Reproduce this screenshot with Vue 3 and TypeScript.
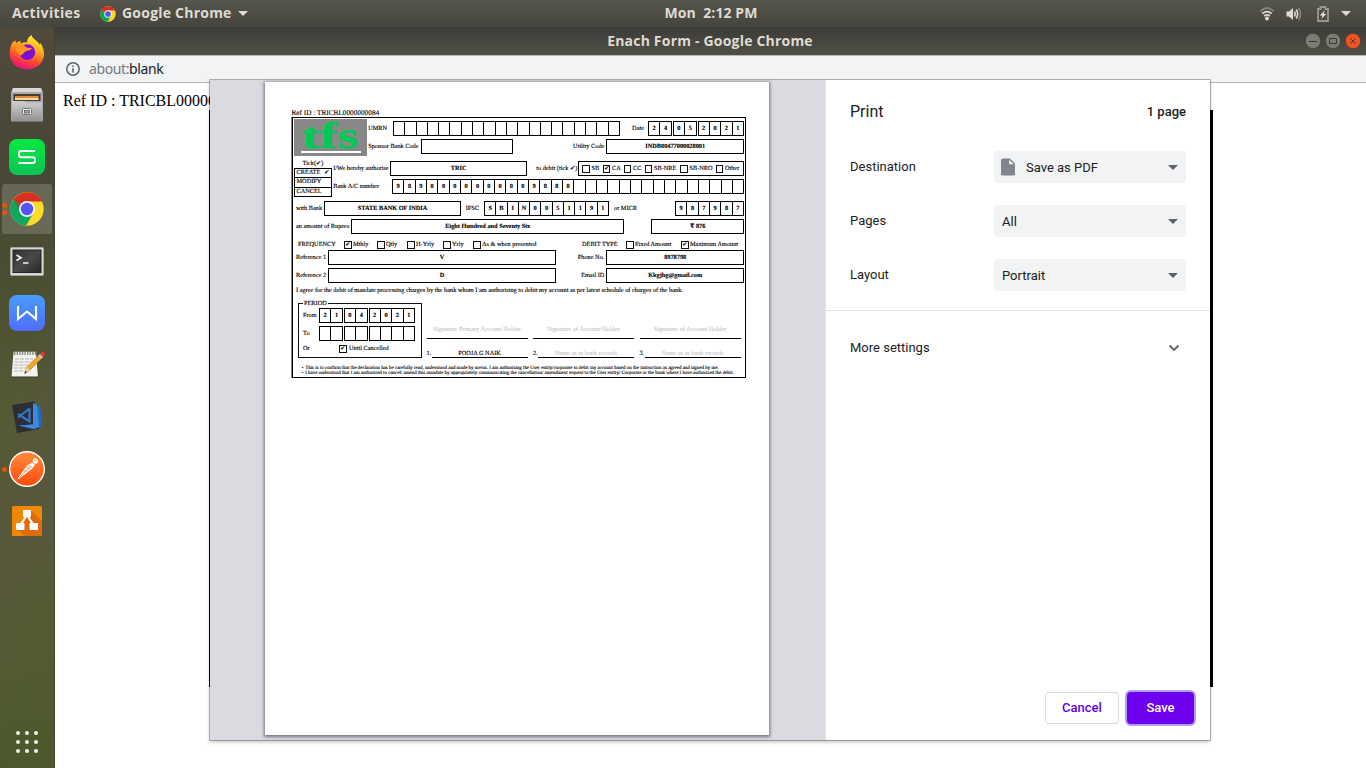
<script setup lang="ts">
const split = (s: string): string[] => s.split('')

const umrn = Array<string>(20).fill('')
const account = split('9890000000009888').concat(Array<string>(15).fill(''))
const ifsc = split('SBIN0051191')
const micr = split('987987')
const issued: string[][] = [split('24'), split('05'), split('2021')]
const fromDate: string[][] = [split('21'), split('04'), split('2021')]
const toDate: string[][] = [['', ''], ['', ''], ['', '', '', '']]

interface Tick { label: string; on?: boolean }
const accountTypes: Tick[] = [
  { label: 'SB' }, { label: 'CA', on: true }, { label: 'CC' },
  { label: 'SB-NRE' }, { label: 'SB-NRO' }, { label: 'Other' },
]
const frequencies: Tick[] = [
  { label: 'Mthly', on: true }, { label: 'Qtly' }, { label: 'H-Yrly' },
  { label: 'Yrly' }, { label: 'As & when presented' },
]
const debitTypes: Tick[] = [{ label: 'Fixed Amount' }, { label: 'Maximum Amount', on: true }]

const signers = [
  { caption: 'Signature Primary Account Holder', no: '1.', name: 'POOJA G NAIK', filled: true },
  { caption: 'Signature of Account Holder', no: '2.', name: 'Name as in bank records', filled: false },
  { caption: 'Signature of Account Holder', no: '3.', name: 'Name as in bank records', filled: false },
]
const settings = [
  { label: 'Destination', value: 'Save as PDF', file: true },
  { label: 'Pages', value: 'All', file: false },
  { label: 'Layout', value: 'Portrait', file: false },
]
</script>

<template>
  <div class="desktop">
    <header class="topbar">
      <div class="top-left">
        <span class="activities">Activities</span>
        <svg class="mini-chrome" width="16" height="16" viewBox="0 0 34 34">
          <circle cx="17" cy="17" r="16.5" fill="#fbd92b" />
          <path d="M17 17 2.7 8.8A16.500 16.500 0 0 1 31.800 9.500H17Z" fill="#dc2d22" />
          <path d="M17 17 2.700 8.800A16.500 16.500 0 0 0 16 33.500L23.500 21Z" fill="#0ea45c" />
          <circle cx="17" cy="17" r="8" fill="#f1f1f1" /><circle cx="17" cy="17" r="6" fill="#5353f0" />
        </svg>
        <span class="appname">Google Chrome</span>
        <i class="caret"></i>
      </div>
      <div class="clock">Mon&nbsp; 2:12 PM</div>
      <div class="top-right">
        <svg class="wifi" width="16" height="14" viewBox="0 0 16 14" fill="none" stroke-width="1.700">
          <path d="M1.300 4.300Q8-2.300 14.700 4.300" stroke="#858479" />
          <path d="M3.300 6.700Q8 2.400 12.700 6.700" stroke="#dfdbd2" />
          <path d="M5.200 9Q8 6.700 10.800 9" stroke="#dfdbd2" />
          <circle cx="8" cy="11.500" r="2" fill="#dfdbd2" />
        </svg>
        <svg class="vol" width="16" height="14" viewBox="0 0 16 14" fill="none" stroke-width="1.600">
          <path d="M.5 4.500H3L7 1v12L3 9.500H.5Z" fill="#dfdbd2" />
          <path d="M8.500 4.500Q10 7 8.500 9.500M10.300 2.500Q13 7 10.300 11.500" stroke="#dfdbd2" />
          <path d="M12.600 1Q16.600 7 12.600 13" stroke="#858479" />
        </svg>
        <svg class="batt" width="12" height="16" viewBox="0 0 12 16">
          <path d="M1 3H3.500V1H8.500V3H11V15H1Z" fill="none" stroke="#999890" stroke-width="1.800" />
          <path d="M7.800 4.300 2.800 9.600H5.500L4.300 13 9.300 8H6.700Z" fill="#e8e5dd" />
        </svg>
        <i class="caret"></i>
      </div>
    </header>

    <div class="main">
      <nav class="dock">
        <div class="slot first">
          <svg width="36" height="36" viewBox="0 0 36 36">
            <defs>
              <linearGradient id="fx" x1=".75" y1="0" x2=".35" y2="1">
                <stop offset="0" stop-color="#fff23a" /><stop offset=".38" stop-color="#ffad1c" />
                <stop offset=".68" stop-color="#ff4a2d" /><stop offset="1" stop-color="#e8107f" />
              </linearGradient>
              <radialGradient id="fxc"><stop offset="0" stop-color="#6b12c8" /><stop offset="1" stop-color="#8f0bd8" /></radialGradient>
            </defs>
            <path d="M3.500 8.500 6.500 6.500 7 9 11.500 6.500V9.500C14 8.500 16 8 18 8.300 18 5 20 2.500 22.500 1 23.500 5 29 7 30.500 10.500L31.500 9C36.500 17 36.500 25.500 29.500 31.500 23 37 12 36.500 5.500 31-.8 25-.5 15 3.500 8.500Z" fill="url(#fx)" />
            <circle cx="18.300" cy="18.300" r="8" fill="url(#fxc)" />
            <path d="M6 10C10 8.500 14 10 18 13.800L23 14C22 16.500 19 16.500 17.500 17 14.500 18 14.500 20.500 11.500 21.500 7.500 19 6 15 6 10Z" fill="#ff9420" />
            <path d="M3 14C5 20 8 23 11.500 23.500 14.500 27.800 22 28 26 22 28 18 26 12 23 10.500 29 12 32 19 29 25.500" fill="none" stroke="#ffb321" stroke-width=".9" opacity=".35" />
          </svg>
        </div>
        <div class="slot">
          <svg width="34" height="36" viewBox="0 0 34 36">
            <defs><linearGradient id="fl" x1="0" y1="0" x2="0" y2="1"><stop offset="0" stop-color="#d0d0d0" /><stop offset="1" stop-color="#939393" /></linearGradient></defs>
            <path d="M3 1H31L33 5V33Q33 34.500 31.500 34.500H2.500Q1 34.500 1 33V5Z" fill="#a9a9a9" />
            <path d="M3 1H31L32 5H2Z" fill="#d8d8d8" />
            <rect x="3.500" y="7" width="27" height="7" fill="#443b30" />
            <path d="M5 9H28.500V12.500H5Z" fill="#e98a32" /><path d="M5 11H28.500V13H5Z" fill="#f7dcae" />
            <path d="M2 14H14L16 15.500H32V33Q32 34 31 34H3Q2 34 2 33Z" fill="url(#fl)" />
            <rect x="12.500" y="21.500" width="9" height="6" rx="1" fill="#e9e9e9" stroke="#777" />
            <rect x="14.500" y="23.500" width="5" height="2.500" fill="#a0a0a0" stroke="#555" stroke-width=".7" />
          </svg>
        </div>
        <div class="slot">
          <svg width="36" height="36" viewBox="0 0 36 36">
            <defs><linearGradient id="sg" x1="0" y1="0" x2="0" y2="1"><stop offset="0" stop-color="#05ea42" /><stop offset="1" stop-color="#08c455" /></linearGradient></defs>
            <rect width="36" height="36" rx="8" fill="url(#sg)" />
            <path d="M26 12H12.500Q10 12 10 14.300V16Q10 18.300 12.500 18.300H23.500Q26 18.300 26 20.500V22Q26 24 23.500 24H9.500" fill="none" stroke="#fff" stroke-width="2" />
          </svg>
        </div>
        <div class="slot active">
          <i class="dots"><b></b><b></b></i>
          <svg width="34" height="34" viewBox="0 0 34 34">
            <circle cx="17" cy="17" r="16.700" fill="#fbdc28" />
            <path d="M17 17 3.300 7.500A16.700 16.700 0 0 1 32 9.500H17Z" fill="#dc2d22" />
            <path d="M17 17 3.300 7.500A16.700 16.700 0 0 0 16 33.700L23.800 20.500Z" fill="#0ea85f" />
            <path d="M3.300 7.500 10 19 16 10Z" fill="#b92a20" opacity=".45" />
            <circle cx="17" cy="17" r="8" fill="#f0f0f2" /><circle cx="17" cy="17" r="6.200" fill="#5555f4" />
          </svg>
        </div>
        <div class="slot">
          <svg width="34" height="29" viewBox="0 0 34 29">
            <defs><linearGradient id="tg" x1="0" y1="0" x2="1" y2="1"><stop offset="0" stop-color="#303030" /><stop offset=".5" stop-color="#494949" /><stop offset="1" stop-color="#262626" /></linearGradient></defs>
            <rect x=".5" y=".5" width="33" height="28" rx="1" fill="#d7d7d5" stroke="#a6a6a2" />
            <rect x="3" y="3" width="28" height="22.500" fill="url(#tg)" stroke="#222" />
            <path d="M6.500 8 11 10.700 6.500 13.500M13 16H18.500" fill="none" stroke="#eee" stroke-width="1.700" />
          </svg>
        </div>
        <div class="slot">
          <svg width="36" height="36" viewBox="0 0 36 36">
            <defs><linearGradient id="wg" x1="0" y1="0" x2="0" y2="1"><stop offset="0" stop-color="#4a9cfa" /><stop offset="1" stop-color="#506cfb" /></linearGradient></defs>
            <rect width="36" height="36" rx="8" fill="url(#wg)" />
            <path d="M9 11V24L18 16.500 27 24V11" fill="none" stroke="#fff" stroke-width="2.100" />
          </svg>
        </div>
        <div class="slot">
          <svg width="36" height="32" viewBox="0 0 36 32">
            <path d="M4.500 3H27L30 28.500H2Z" fill="#34352b" />
            <path d="M4.500 3H27L29 27.500H2.500Z" fill="#f2f2ee" />
            <path d="M5 4H28" stroke="#8a8a84" stroke-width="4" stroke-dasharray="1.400 1.200" />
            <path d="M6 10H24M5.500 13H22M5.500 16H20M5 19H18M5 22H14" stroke="#b4b4b0" stroke-width="1" stroke-dasharray="4 1" />
            <path d="M15.500 24.500 18 18 31 5 34 8 21 21Z" fill="#f0a82b" stroke="#b9731c" stroke-width=".6" />
            <path d="M15.500 24.500 18 18 21 21Z" fill="#ead09e" /><path d="M15.300 24.700 16.500 21.700 18 23.200Z" fill="#333" />
            <path d="M30 6 32 4Q34 2 35.500 3.500 37 5 33.500 8.500Z" fill="#dd3540" /><path d="M29 7 31 5 34 8 32 10Z" fill="#bdbdbd" />
          </svg>
        </div>
        <div class="slot">
          <svg width="32" height="34" viewBox="0 0 32 34">
            <path d="M1 5 23 1.500 24 3 28 29 6 33Z" fill="#2d2d34" />
            <path d="M22 3 29.500 7 31 26 23 29 7.500 25.500 22 24.500Z" fill="#2368bd" />
            <path d="M22 3 26 5 28 27 23 29 7.500 25.500 22 24.500Z" fill="#3a8be0" />
            <path d="M18.500 8.500 7 17.500M7 14 18.500 21.500V8.500" fill="none" stroke="#3178c8" stroke-width="2.200" />
          </svg>
        </div>
        <div class="slot">
          <i class="dots one"><b></b></i>
          <svg width="36" height="36" viewBox="0 0 36 36">
            <defs><linearGradient id="pg" x1="0" y1="0" x2="0" y2="1"><stop offset="0" stop-color="#ff8a3c" /><stop offset="1" stop-color="#ff4b0c" /></linearGradient></defs>
            <circle cx="18" cy="18" r="17.300" fill="url(#pg)" stroke="#fff" stroke-width="1.400" />
            <circle cx="26.300" cy="10" r="2.700" fill="#fff" /><path d="M24.800 10 28.300 8.700" stroke="#ff7b32" stroke-width=".8" />
            <path d="M23 11.500 26 14 22.500 18.500 17.500 22 10 27.800 8.500 28.500 9 27 14 20 18 14.500Z" fill="#fff" />
            <path d="M17.500 16 21.500 18.500M19.500 14 23.500 17M15 20 19 20.200M27 13.500 27.500 15M10.500 26.500 21 15.500" stroke="#ff6c26" stroke-width=".7" />
          </svg>
        </div>
        <div class="slot">
          <svg width="30" height="30" viewBox="0 0 30 30">
            <rect width="30" height="30" rx="1.500" fill="#f08705" />
            <path d="M19 4.500 30 15.500V30H13L5 23.500 12 16Z" fill="#df6c0c" />
            <path d="M15 9 8.500 19M15 9 21.500 19" stroke="#fff" stroke-width="2.200" />
            <rect x="11" y="4" width="8" height="7" rx=".8" fill="#fff" /><rect x="4" y="17" width="8.500" height="7" rx=".8" fill="#fff" /><rect x="17.500" y="17" width="8.500" height="7" rx=".8" fill="#fff" />
          </svg>
        </div>
        <div class="apps"><b v-for="n in 9" :key="n"></b></div>
      </nav>

      <section class="window">
        <div class="titlebar">
          <span class="wtitle">Enach Form - Google Chrome</span>
          <div class="winbtns">
            <svg v-for="k in 3" :key="k" width="16" height="16" viewBox="0 0 16 16" :class="['wb', { close: k === 3 }]">
              <circle cx="8" cy="8" r="7.700" />
              <path v-if="k === 1" d="M4 8.500H12" /><path v-else-if="k === 2" d="M4.500 5.500H11.500V10.500H4.500Z" /><path v-else d="M5.500 5.500 10.500 10.500M10.500 5.500 5.500 10.500" />
            </svg>
          </div>
        </div>
        <div class="address">
          <svg width="14" height="14" viewBox="0 0 14 14" fill="none" stroke="#5f6368" stroke-width="1.500">
            <circle cx="7" cy="7" r="6.200" /><path d="M7 6.200V10.500M7 3.500V5" stroke-width="1.600" />
          </svg>
          <span class="url">about:<em>blank</em></span>
        </div>
        <div class="page">
          <div class="pageref">Ref ID : TRICBL0000000084</div>
          <div class="frame"></div>
        </div>

        <div class="dialog">
          <div class="preview">
            <div class="paper">
              <div class="refid">Ref ID : TRICBL0000000084</div>
              <div class="form">
                <div class="head">
                  <div class="logo"><span>tfs</span></div>
                  <div class="headrows">
                    <div class="row r1">
                      <span class="lb">UMRN</span>
                      <div class="cells"><b v-for="(c, i) in umrn" :key="i">{{ c }}</b></div>
                      <span class="rt date">Date</span>
                      <div class="groups"><div v-for="(g, i) in issued" :key="i" class="cells" :class="{ wide: i === 2 }"><b v-for="(c, j) in g" :key="j">{{ c }}</b></div></div>
                    </div>
                    <div class="row r2">
                      <span class="lb">Sponsor Bank Code</span><div class="box"></div>
                      <span class="rt">Utility Code</span><div class="box">INDB00477000028001</div>
                    </div>
                  </div>
                </div>

                <div class="auth">
                  <div class="ticks">
                    <div class="tickhead">Tick(✔)</div>
                    <div class="tickrow"><span>CREATE</span><span>✔</span></div>
                    <div class="tickrow">MODIFY</div><div class="tickrow">CANCEL</div>
                  </div>
                  <div class="authrows">
                    <div class="row r3">
                      <span class="lb">I/We hereby authorise</span><div class="box">TRIC</div>
                      <span class="rt tight">to debit (tick ✔)</span>
                      <div class="box types"><span v-for="t in accountTypes" :key="t.label" class="chk"><i>{{ t.on ? '✔' : '' }}</i>{{ t.label }}</span></div>
                    </div>
                    <div class="row r4">
                      <span class="lb">Bank A/C number</span>
                      <div class="cells"><b v-for="(c, i) in account" :key="i">{{ c }}</b></div>
                    </div>
                  </div>
                </div>

                <div class="row r5">
                  <span class="in">with Bank</span><div class="box">STATE BANK OF INDIA</div>
                  <span class="rt ifsc">IFSC</span><div class="cells"><b v-for="(c, i) in ifsc" :key="i">{{ c }}</b></div>
                  <span class="micr">or MICR</span><div class="cells"><b v-for="(c, i) in micr" :key="i">{{ c }}</b></div>
                </div>
                <div class="row r6">
                  <span class="in">an amount of Rupees</span><div class="box">Eight Hundred and Seventy Six</div><span></span><div class="box">₹ 876</div>
                </div>
                <div class="row r7">
                  <span class="freq">FREQUENCY</span>
                  <span v-for="t in frequencies" :key="t.label" class="chk"><i>{{ t.on ? '✔' : '' }}</i>{{ t.label }}</span>
                  <span>DEBIT TYPE</span>
                  <span v-for="t in debitTypes" :key="t.label" class="chk"><i>{{ t.on ? '✔' : '' }}</i>{{ t.label }}</span>
                </div>
                <div class="row r8"><span class="in">Reference 1</span><div class="box">V</div><span class="rt">Phone No.</span><div class="box">8978798</div></div>
                <div class="row r8"><span class="in">Reference 2</span><div class="box">D</div><span class="rt">Email ID</span><div class="box">Kkgjhg@gmail.com</div></div>
                <div class="agree">I agree for the debit of mandate processing charges by the bank whom I am authorising to debit my account as per latest schedule of charges of the bank.</div>

                <div class="lower">
                  <div class="period">
                    <span class="legend">PERIOD</span>
                    <div class="row r9"><span class="pl">From</span><div class="groups"><div v-for="(g, i) in fromDate" :key="i" class="cells" :class="{ wide: i === 2 }"><b v-for="(c, j) in g" :key="j">{{ c }}</b></div></div></div>
                    <div class="row r9"><span class="pl">To</span><div class="groups"><div v-for="(g, i) in toDate" :key="i" class="cells" :class="{ wide: i === 2 }"><b v-for="(c, j) in g" :key="j">{{ c }}</b></div></div></div>
                    <div class="until"><span class="pl">Or</span><span class="chk"><i>✔</i>Until Cancelled</span></div>
                  </div>
                  <div v-for="s in signers" :key="s.no" class="signer">
                    <div class="sig">{{ s.caption }}</div>
                    <div class="named"><span>{{ s.no }}</span><div :class="{ filled: s.filled }">{{ s.name }}</div></div>
                  </div>
                </div>
                <div class="notes">
                  <div class="n1">This is to confirm that the declaration has be carefully read, understood and made by me/us. I am authorising the User entity/corporate to debit my account based on the instruction as agreed and signed by me.</div>
                  <div class="n2">I have understood that I am authorized to cancel/ amend this mandate by appropriately communicating the cancellation/ amendment request to the User entity/ Corporate or the bank where I have authorized the debit.</div>
                </div>
              </div>
            </div>
          </div>

          <aside class="options">
            <div class="ohead"><span>Print</span><strong>1 page</strong></div>
            <div v-for="s in settings" :key="s.label" class="setting">
              <span>{{ s.label }}</span>
              <div class="select">
                <svg v-if="s.file" width="14" height="18" viewBox="0 0 14 18"><path d="M2 .5H9L14 5.500V16Q14 17.500 12.500 17.500H1.500Q0 17.500 0 16V2Q0 .5 2 .5Z" fill="#80868b" /><path d="M8.200 1.800V6.200H12.600Z" fill="#f1f3f4" /></svg>
                <span>{{ s.value }}</span><i></i>
              </div>
            </div>
            <div class="more"><span>More settings</span>
              <svg width="12" height="8" viewBox="0 0 12 8"><path d="M1.500 1.500 6 6 10.500 1.500" fill="none" stroke="#5f6368" stroke-width="1.800" /></svg>
            </div>
            <div class="actions"><button class="cancel">Cancel</button><button class="save">Save</button></div>
          </aside>
        </div>
      </section>
    </div>
  </div>
</template>

<style>
html, body { margin: 0; overflow: hidden; }
</style>

<style scoped>
* { box-sizing: border-box; }
.desktop { width: 1366px; height: 768px; overflow: hidden; display: flex; flex-direction: column; background: #fff; }
.topbar { height: 27px; display: flex; align-items: center; background: linear-gradient(#57564d, #45443d); color: #dfdbd2; font: 700 14px/26px "Open Sans", "Noto Sans", sans-serif; letter-spacing: .15px; }
.top-left, .top-right { display: flex; align-items: center; height: 27px; }
.top-left { width: 664.500px; padding-left: 12px; }
.top-left > span, .clock { height: 27px; line-height: 26px; }
.activities { width: 88px; letter-spacing: .35px; }
.mini-chrome { margin-right: 6px; }
.appname { width: 112px; letter-spacing: .22px; }
.caret { border: 5px solid transparent; border-top: 5px solid #dfdbd2; border-bottom: 0; margin-left: 4px; }
.clock { white-space: pre; letter-spacing: .08px; }
.top-right { flex: 1; justify-content: flex-end; padding-right: 15px; }
.wifi { margin-right: 11px; }
.vol { margin-right: 15px; }
.batt { margin-right: 8px; }
.main { flex: 1; display: flex; min-height: 0; }
.dock { width: 55px; background: linear-gradient(100deg, transparent 40%, rgba(90, 80, 80, .18) 60%, transparent 75%), linear-gradient(#504a3c, #494737 18%, #4a4d31 32%, #555a34 52%, #57593a 68%, #535c30 84%, #4c572b); border-right: 1px solid #45452e; display: flex; flex-direction: column; position: relative; }
.slot { height: 52px; display: flex; align-items: center; justify-content: center; position: relative; flex: none; }
.slot.first { padding-bottom: 2px; }
.slot.active::before { content: ""; position: absolute; left: 2px; top: 1px; width: 50px; height: 50px; border-radius: 3px; background: rgba(255, 255, 255, .17); }
.slot svg { position: relative; }
.dots { position: absolute; left: 2px; top: 20px; display: grid; gap: 2px; }
.dots.one { top: 24px; }
.dots b { width: 5px; height: 5px; border-radius: 50%; background: #e8510d; }
.apps { margin: auto 0 15px 16px; display: grid; grid-template-columns: repeat(3, 4px); gap: 5px; }
.apps b { width: 4px; height: 4px; border-radius: 50%; background: #f1f1ee; }
.window { flex: 1; position: relative; background: #fff; display: flex; flex-direction: column; }
.titlebar { height: 28px; background: linear-gradient(#3c3b37, #504f47); display: flex; align-items: flex-start; justify-content: center; color: #dfdbd2; font: 700 14px/27px "Open Sans", "Noto Sans", sans-serif; letter-spacing: .2px; position: relative; }
.wtitle { margin-left: -1px; }
.winbtns { position: absolute; right: 5px; top: 6px; display: flex; gap: 4px; }
.wb { fill: #7d7c74; stroke: #3c3b37; stroke-width: 1; }
.wb circle { stroke: #34332f; stroke-width: .6; }
.wb path { fill: none; }
.wb.close circle { fill: #ee5421; }
.address { height: 28px; background: #f1f3f4; border-top: 1px solid #b8b8b5; border-bottom: 1px solid #b2b4b6; display: flex; align-items: center; padding-left: 11px; gap: 9px; font: 14px/26px "Noto Sans", sans-serif; color: #74787d; letter-spacing: -.4px; }
.url em { font-style: normal; color: #202124; }
.page { flex: 1; padding: 9px 8px 8px; }
.pageref { font: 16px/18px "Liberation Serif", serif; color: #000; }
.frame { margin: 0 0 0 146px; width: 1004px; height: 577px; border: 2px solid #000; border-right-width: 3px; }
.dialog { position: absolute; left: 155px; top: 53px; width: 1000px; height: 660px; background: #fff; display: flex; box-shadow: 0 0 0 1px rgba(0, 0, 0, .26), 0 2px 4px rgba(0, 0, 0, .25); }
.preview { width: 616px; background: #dadae0; border-right: 1px solid #e6e6e9; padding: 2px 0 0 55px; }
.paper { width: 504px; height: 653px; background: #fff; box-shadow: 0 1px 3px 1px rgba(60, 60, 70, .65); padding: 26px 0 0 27px; color: #000; font: 6.300px/8px "Liberation Serif", "DejaVu Sans", serif; text-rendering: geometricPrecision; white-space: nowrap; -webkit-text-stroke: .12px; }
.refid { font-size: 7.270px; line-height: 9px; height: 9px; padding-top: 1px; margin-left: -.5px; }
.form { width: 454px; height: 261px; border: 1px solid #000; box-shadow: -1px 0 #888; }
.head { display: flex; height: 38px; }
.logo { width: 73px; height: 37px; margin: 1px 0 0 1px; background: #888; display: flex; flex-direction: column; align-items: center; }
.logo span { font: 700 37px/35px "Liberation Serif", serif; color: #00c955; height: 32px; letter-spacing: .5px; transform: scaleX(1.400); -webkit-text-stroke: .5px; }
.logo::after { content: ""; width: 60px; height: 2px; background: #fff; }
.headrows { padding-top: 3px; }
.row { display: grid; height: 15px; align-items: center; }
.row > .box, .row > .cells, .groups { height: 15px; }
.r1 { grid-template-columns: 26px 227px 28px 96px; }
.r2 { grid-template-columns: 54px 92px 93.400px 137.600px; margin-top: 3px; }
.lb { padding-left: 1.200px; }
.rt { text-align: right; padding-right: 2px; }
.rt.date { padding-right: 4px; }
.rt.tight { padding-right: 1.200px; }
.rt.ifsc { padding-right: 5px; }
.micr { padding-left: 5px; }
.in { padding-left: 3px; }
.box { border: 1px solid #000; display: flex; align-items: center; justify-content: center; font-weight: 700; }
.cells { display: flex; border: 1px solid #000; border-left: 0; flex: 2; }
.cells.wide { flex: 4; }
.cells b { flex: 1; border-left: 1px solid #000; display: flex; align-items: center; justify-content: center; font-weight: 700; }
.groups { display: flex; gap: 1px; }
.auth { display: flex; height: 36px; margin-top: 2px; }
.ticks { width: 38px; margin-left: 1px; flex: none; }
.tickhead { height: 9px; line-height: 10px; text-align: center; padding-top: .5px; }
.tickrow { height: 10.500px; border: 1px solid #000; margin-bottom: -1px; padding: 0 1.500px; display: flex; justify-content: space-between; align-items: center; position: relative; top: .5px; }
.authrows { padding-top: 3px; }
.r3 { grid-template-columns: 58.400px 136.600px 51.500px 165.500px; }
.r4 { grid-template-columns: 60px 352px; margin-top: 3px; }
.types { font-weight: 400; display: grid; grid-template-columns: 20.500px 21px 21px 35.500px 35.500px 1fr; justify-content: start; padding-left: 3px; }
.chk { display: flex; align-items: center; gap: 1.500px; }
.chk i { width: 7.500px; height: 8px; border: 1px solid #111; font: normal 6px/6px "DejaVu Sans", sans-serif; text-align: center; flex: none; }
.r5 { grid-template-columns: 31px 137px 23px 125px 66px 69px; margin-top: 7px; }
.r6 { grid-template-columns: 58.400px 272.600px 27.400px 92.600px; margin-top: 3px; }
.r7 { grid-template-columns: 51px 33px 30px 36px 30px 109px 44px 55px 63px; height: 8px; margin: 6.500px 0 -1.500px; }
.freq { padding-left: 5px; }
.r8 { grid-template-columns: 35px 228px 50.400px 137.600px; margin-top: 3px; }
.agree { margin: 4px 0 -1px 3px; font-size: 6.330px; }
.lower { display: flex; margin-top: 9px; height: 55px; }
.period { width: 124px; height: 55px; margin-left: 5px; border: 1px solid #111; position: relative; padding-top: 4px; flex: none; }
.legend { position: absolute; left: 4px; top: -4.500px; background: #fff; padding: 0 1px; }
.r9 { grid-template-columns: 20px 96px; margin-bottom: 3px; }
.pl { padding-left: 4px; }
.until { display: flex; padding-top: .5px; }
.until .pl { width: 40px; }
.until .chk { gap: 2.500px; }
.signer { width: 101px; margin-left: 5.500px; }
.period + .signer { margin-left: 4.500px; }
.sig { height: 36px; padding-top: 23px; border-bottom: 1px solid #000; text-align: center; color: #c8c8c8; }
.named { height: 19px; display: flex; align-items: flex-end; }
.named > span { width: 5px; flex: none; }
.named > div { flex: 1; height: 9px; line-height: 9px; border-bottom: 1px solid #000; text-align: center; color: #c8c8c8; }
.named > .filled { color: #000; }
.notes { margin: 7.500px 0 0 8.700px; font-size: 4.990px; line-height: 5.200px; }
.notes div::before { content: "•"; margin-right: 1.700px; }
.options { flex: 1; display: flex; flex-direction: column; font: 13px/20px Roboto, sans-serif; color: #202124; }
.ohead { display: flex; justify-content: space-between; align-items: center; padding: 0 24px; height: 64px; font-size: 16px; margin-bottom: 7px; }
.ohead strong { font-size: 13px; font-weight: 500; }
.setting { display: flex; justify-content: space-between; align-items: center; padding: 0 24px; height: 32px; margin-bottom: 22px; }
.select { width: 192px; height: 32px; background: #f1f3f4; border-radius: 4px; display: flex; align-items: center; padding: 1px 8px 0; }
.select svg { margin: -1px 11px 0 -1px; }
.select i { margin-left: auto; border: 5px solid transparent; border-top-color: #5f6368; border-bottom: 0; }
.more { border-top: 1px solid #e4e5e7; margin-top: -3px; padding: 0 30px 0 24px; height: 75px; display: flex; align-items: center; justify-content: space-between; }
.actions { margin-top: auto; display: flex; justify-content: flex-end; gap: 8px; padding: 0 16px 16px; }
.actions button { font: 500 13px/30px Roboto, sans-serif; padding: 0; height: 32px; border-radius: 4px; }
.cancel { width: 74px; border: 1px solid #dadce0; background: #fff; color: #6200ee; }
.save { width: 67px; border: 0; background: #6e00ee; color: #fff; box-shadow: 0 0 0 2px #aca0f6; }
</style>
